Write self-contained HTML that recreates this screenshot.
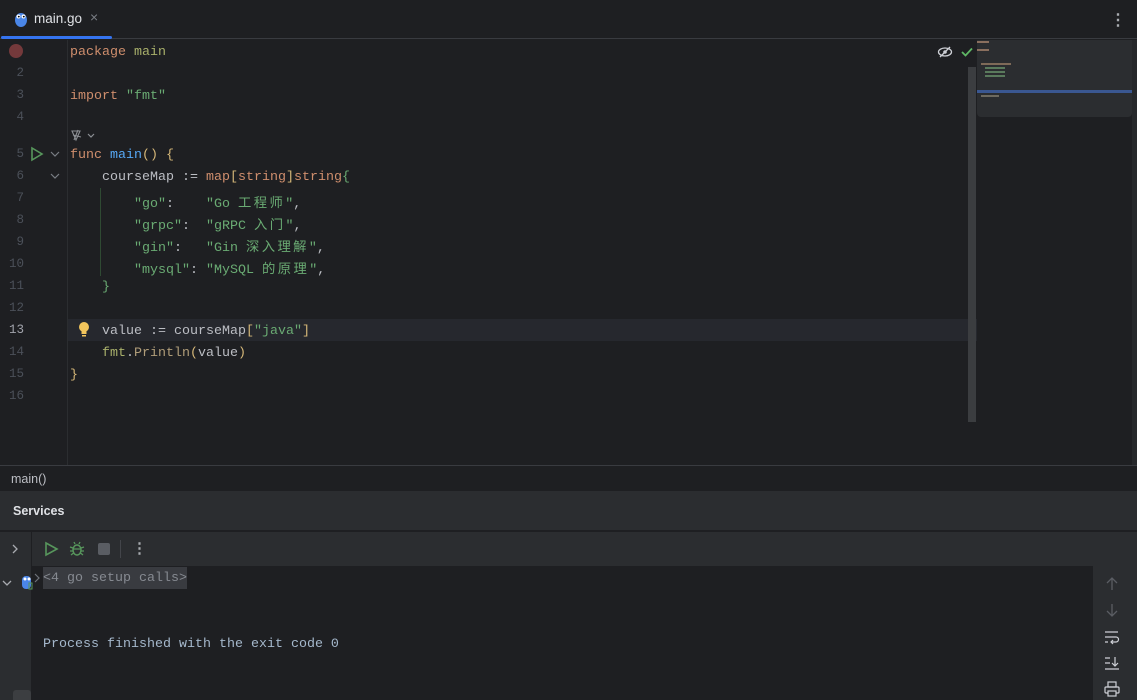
<!DOCTYPE html>
<html><head><meta charset="utf-8"><style>
*{margin:0;padding:0;box-sizing:border-box}
body{width:1137px;height:700px;background:#1e1f22;position:relative;overflow:hidden;font-family:"Liberation Sans","Noto Sans CJK SC",sans-serif;color:#bcbec4}
.abs{position:absolute}
.mono{font-family:"Liberation Mono","Noto Sans CJK SC",monospace;font-size:13.33px;white-space:pre}
.ln{position:absolute;left:0;width:24px;text-align:right;color:#4b5059;font-family:"Liberation Mono",monospace;font-size:12.5px}
.code{position:absolute;left:70px}
.k{color:#cf8e6d}.s{color:#6aab73}.f{color:#56a8f5}.b{color:#d5b778}.p{color:#57aaf7}
.c{letter-spacing:2.4px}
</style></head><body>
<div class="abs" style="left:0;top:0;width:1137px;height:39px;background:#1e1f22;border-bottom:1px solid #393b40"></div>
<svg class="abs" style="left:14px;top:11px" width="14" height="16" viewBox="0 0 14 16"><ellipse cx="7" cy="9" rx="6" ry="7" fill="#4a86e8"/><circle cx="4.5" cy="5.5" r="2" fill="#fff"/><circle cx="9.5" cy="5.5" r="2" fill="#fff"/><circle cx="4.8" cy="5.6" r="0.9" fill="#000"/><circle cx="9.8" cy="5.6" r="0.9" fill="#000"/></svg>
<div class="abs" style="left:34px;top:11px;font-size:13.5px;color:#dfe1e5">main.go</div>
<div class="abs" style="left:90px;top:9px;font-size:14px;color:#7a7e85">×</div>
<div class="abs" style="left:1px;top:36px;width:111px;height:3px;background:#3574f0;border-radius:2px"></div>
<div class="abs" style="left:1110px;top:10px;font-size:16px;color:#a8abb0;font-weight:bold">⋮</div>
<div class="abs" style="left:67px;top:40px;width:1px;height:425px;background:#2b2d30"></div>
<div class="abs" style="left:68px;top:319px;width:909px;height:22px;background:#26282e"></div>
<div class="abs" style="left:9px;top:44px;width:14px;height:14px;border-radius:50%;background:#74393b"></div>
<div class="mono" style="position:absolute;left:0;top:2px">
<div class="ln" style="top:64px">2</div>
<div class="ln" style="top:86px">3</div>
<div class="ln" style="top:108px">4</div>
<div class="ln" style="top:145px">5</div>
<div class="ln" style="top:167px">6</div>
<div class="ln" style="top:189px">7</div>
<div class="ln" style="top:211px">8</div>
<div class="ln" style="top:233px">9</div>
<div class="ln" style="top:255px">10</div>
<div class="ln" style="top:277px">11</div>
<div class="ln" style="top:299px">12</div>
<div class="ln" style="top:321px;color:#a1a3ab">13</div>
<div class="ln" style="top:343px">14</div>
<div class="ln" style="top:365px">15</div>
<div class="ln" style="top:387px">16</div>
</div>
<svg class="abs" style="left:30px;top:146px" width="14" height="16"><path d="M2 2 L12 8 L2 14 Z" fill="none" stroke="#57965c" stroke-width="1.6"/></svg>
<svg class="abs" style="left:50px;top:150px" width="10" height="8"><path d="M1 2 L5 6 L9 2" fill="none" stroke="#7a7e85" stroke-width="1.2"/></svg>
<svg class="abs" style="left:50px;top:172px" width="10" height="8"><path d="M1 2 L5 6 L9 2" fill="none" stroke="#7a7e85" stroke-width="1.2"/></svg>
<svg class="abs" style="left:70px;top:128px" width="26" height="14"><path d="M2 3 L10 3 L6 12 Z M3 7 L11 9 M8 2 L4 12" fill="none" stroke="#8c8f94" stroke-width="1.1"/><path d="M18 6 L21 9 L24 6" fill="none" stroke="#8c8f94" stroke-width="1.2"/></svg>
<svg class="abs" style="left:78px;top:321px" width="12" height="17"><circle cx="6" cy="6" r="5" fill="#f2c55c"/><rect x="3.5" y="10" width="5" height="3" fill="#f2c55c"/><rect x="4" y="14" width="4" height="1.5" fill="#f2c55c"/></svg>
<div class="abs" style="left:100px;top:188px;width:1px;height:88px;background:#2f4a33"></div>
<div class="mono" style="position:absolute;left:0;top:2px">
<div class="code" style="top:43px"><span class="k">package</span> <span style="color:#a9b06b">main</span></div>
<div class="code" style="top:87px"><span class="k">import</span> <span class="s">"fmt"</span></div>
<div class="code" style="top:146px"><span class="k">func</span> <span class="f">main</span><span class="b">()</span> <span class="b">{</span></div>
<div class="code" style="top:168px">    courseMap := <span class="k">map</span><span class="b">[</span><span class="k">string</span><span class="b">]</span><span class="k">string</span><span class="s">{</span></div>
<div class="code" style="top:190px">        <span class="s">"go"</span>:    <span class="s">"Go <span class="c">工程师</span>"</span>,</div>
<div class="code" style="top:212px">        <span class="s">"grpc"</span>:  <span class="s">"gRPC <span class="c">入门</span>"</span>,</div>
<div class="code" style="top:234px">        <span class="s">"gin"</span>:   <span class="s">"Gin <span class="c">深入理解</span>"</span>,</div>
<div class="code" style="top:256px">        <span class="s">"mysql"</span>: <span class="s">"MySQL <span class="c">的原理</span>"</span>,</div>
<div class="code" style="top:278px">    <span class="s">}</span></div>
<div class="code" style="top:322px">    value := courseMap<span class="b">[</span><span class="s">"java"</span><span class="b">]</span></div>
<div class="code" style="top:344px">    <span style="color:#a9b06b">fmt</span>.<span style="color:#b09d79">Println</span><span class="b">(</span>value<span class="b">)</span></div>
<div class="code" style="top:366px"><span class="b">}</span></div>
</div>
<svg class="abs" style="left:937px;top:45px" width="16" height="14"><ellipse cx="8" cy="7" rx="6.5" ry="4" fill="none" stroke="#ced0d6" stroke-width="1.3"/><circle cx="8" cy="7" r="1.8" fill="#ced0d6"/><path d="M3 12 L13 2" stroke="#ced0d6" stroke-width="1.3"/></svg>
<svg class="abs" style="left:960px;top:46px" width="14" height="12"><path d="M2 6 L5.5 9.5 L12 2.5" fill="none" stroke="#5fb865" stroke-width="1.8"/></svg>
<div class="abs" style="left:968px;top:67px;width:8px;height:355px;background:#3b3d40"></div>
<div class="abs" style="left:977px;top:40px;width:155px;height:77px;background:#2b2d30;border-radius:0 0 4px 4px"></div>
<div class="abs" style="left:977px;top:90px;width:155px;height:3px;background:#3a5791"></div>
<div class="abs" style="left:977px;top:41px;width:12px;height:2px;background:#8a6f5e"></div>
<div class="abs" style="left:977px;top:49px;width:12px;height:2px;background:#8a6f5e"></div>
<div class="abs" style="left:981px;top:63px;width:30px;height:2px;background:#7e6a58"></div>
<div class="abs" style="left:985px;top:67px;width:20px;height:12px;background:repeating-linear-gradient(#5a7a5c 0 2px,transparent 2px 4px)"></div>
<div class="abs" style="left:981px;top:95px;width:18px;height:2px;background:#6d6a60"></div>
<div class="abs" style="left:1132px;top:40px;width:5px;height:425px;background:#26282b"></div>
<div class="abs" style="left:0;top:465px;width:1137px;height:1px;background:#393b40"></div>
<div class="abs" style="left:11px;top:472px;font-size:12.5px;color:#bcbec4">main()</div>
<div class="abs" style="left:0;top:491px;width:1137px;height:40px;background:#2b2d30;border-bottom:1px solid #1e1f22"></div>
<div class="abs" style="left:13px;top:504px;font-size:12.5px;font-weight:bold;color:#dfe1e5">Services</div>
<div class="abs" style="left:0;top:532px;width:32px;height:168px;background:#2b2d30;border-right:1px solid #1e1f22"></div>
<div class="abs" style="left:32px;top:532px;width:1105px;height:34px;background:#2b2d30"></div>
<div class="abs" style="left:1093px;top:566px;width:44px;height:134px;background:#2b2d30"></div>
<div class="abs" style="left:13px;top:690px;width:18px;height:10px;background:#3c3e41;border-radius:3px 3px 0 0"></div>
<svg class="abs" style="left:10px;top:543px" width="10" height="12"><path d="M3 2 L7 6 L3 10" fill="none" stroke="#a8abb0" stroke-width="1.3"/></svg>
<svg class="abs" style="left:1px;top:578px" width="12" height="10"><path d="M2 3 L6 7 L10 3" fill="none" stroke="#a8abb0" stroke-width="1.3"/></svg>
<svg class="abs" style="left:21px;top:575px" width="12" height="15"><rect x="1" y="1" width="9" height="13" rx="4" fill="#4a86e8"/><circle cx="4" cy="4" r="1.5" fill="#fff"/><circle cx="8" cy="4" r="1.5" fill="#fff"/><rect x="8" y="8" width="3" height="6" fill="none" stroke="#57965c"/></svg>
<svg class="abs" style="left:44px;top:541px" width="16" height="16"><path d="M2 2 L13 8 L2 14 Z" fill="none" stroke="#57965c" stroke-width="1.6"/></svg>
<svg class="abs" style="left:69px;top:541px" width="16" height="16"><ellipse cx="8" cy="9" rx="4" ry="5" fill="none" stroke="#57965c" stroke-width="1.5"/><path d="M1 6 L4 7 M15 6 L12 7 M1 10 H4 M15 10 H12 M2 14 L4.5 12 M14 14 L11.5 12 M6 3 L5 1 M10 3 L11 1 M4 8 H12" stroke="#57965c" stroke-width="1.3"/></svg>
<div class="abs" style="left:98px;top:543px;width:12px;height:12px;background:#5a5d63;border-radius:2px"></div>
<div class="abs" style="left:120px;top:540px;width:1px;height:18px;background:#43454a"></div>
<div class="abs" style="left:132px;top:539px;font-size:15px;color:#a8abb0;font-weight:bold">⋮</div>
<svg class="abs" style="left:33px;top:572px" width="8" height="12"><path d="M2 2 L6 6 L2 10" fill="none" stroke="#6f737a" stroke-width="1.2"/></svg>
<div class="abs" style="left:43px;top:567px;width:144px;height:22px;background:#393b40"></div>
<div class="mono abs" style="left:43px;top:571px;color:#868a91">&lt;4 go setup calls&gt;</div>
<div class="mono abs" style="left:43px;top:637px;color:#a5b8cc">Process finished with the exit code 0</div>
<svg class="abs" style="left:1105px;top:576px" width="14" height="16"><path d="M7 14 V2 M2 7 L7 2 L12 7" fill="none" stroke="#5a5d63" stroke-width="1.3"/></svg>
<svg class="abs" style="left:1105px;top:602px" width="14" height="16"><path d="M7 2 V14 M2 9 L7 14 L12 9" fill="none" stroke="#5a5d63" stroke-width="1.3"/></svg>
<svg class="abs" style="left:1104px;top:629px" width="16" height="16"><path d="M1 3 H14 M1 8 H12 A2.5 2.5 0 0 1 12 13 H7 M9 11 L7 13 L9 15 M1 13 H4" fill="none" stroke="#ced0d6" stroke-width="1.2"/></svg>
<svg class="abs" style="left:1104px;top:655px" width="16" height="16"><path d="M1 3 H6 M1 8 H6 M1 14 H15 M11 2 V11 M8 8 L11 11 L14 8" fill="none" stroke="#ced0d6" stroke-width="1.2"/></svg>
<svg class="abs" style="left:1104px;top:681px" width="16" height="16"><rect x="4" y="1" width="8" height="5" fill="none" stroke="#ced0d6" stroke-width="1.2"/><rect x="1" y="6" width="14" height="6" rx="1" fill="none" stroke="#ced0d6" stroke-width="1.2"/><rect x="4" y="10" width="8" height="5" fill="#2b2d30" stroke="#ced0d6" stroke-width="1.2"/></svg>
</body></html>
